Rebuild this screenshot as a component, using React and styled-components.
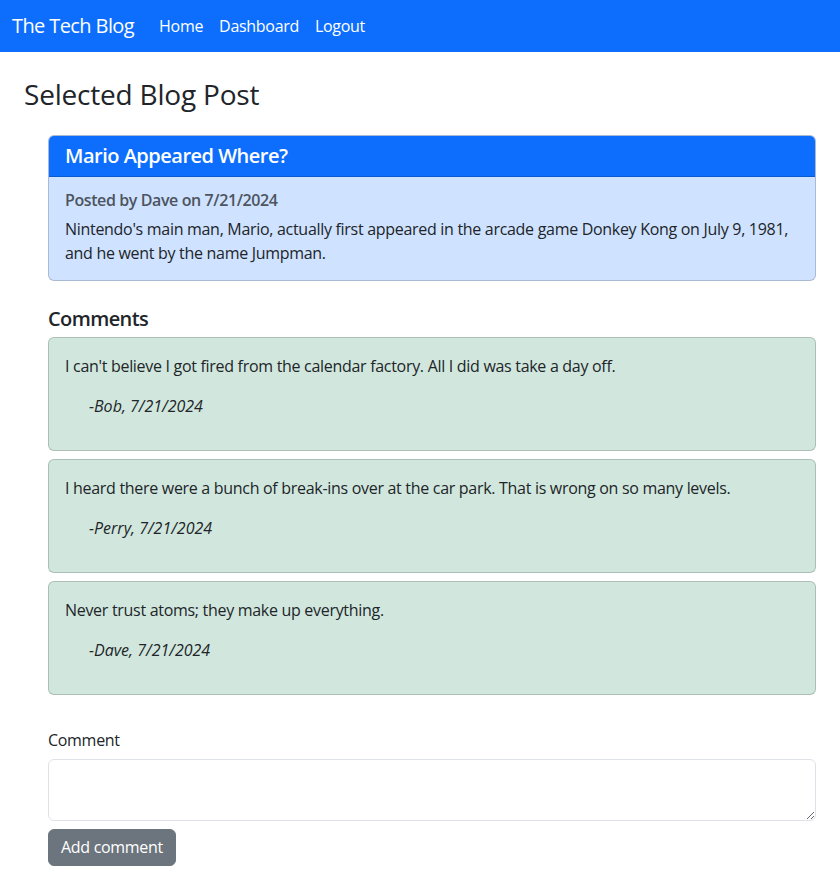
import styled, { createGlobalStyle } from 'styled-components';

const GlobalStyle = createGlobalStyle`
  body {
    margin: 0;
    font-family: "Open Sans", "Noto Sans", sans-serif;
    font-size: 16px;
    line-height: 1.5;
    letter-spacing: -0.3px;
    color: #212529;
    background: #fff;
  }
`;

const Navbar = styled.nav`
  display: flex;
  align-items: center;
  height: 52px;
  padding: 0 12px;
  background: #0d6efd;
  box-sizing: border-box;
`;

const Brand = styled.a`
  font-size: 20px;
  letter-spacing: -0.6px;
  color: #fff;
  margin-right: 25px;
  text-decoration: none;
`;

const NavLinks = styled.div`
  display: flex;
  gap: 16px;
`;

const NavLink = styled.a`
  color: #fff;
  text-decoration: none;
`;

const Main = styled.main`
  padding: 0 24px;
`;

const PageTitle = styled.h2`
  font-size: 28px;
  font-weight: 500;
  letter-spacing: -0.2px;
  line-height: 1.2;
  margin: 26px 0 23px;
`;

const Section = styled.section`
  padding-left: 24px;
`;

const Card = styled.div`
  border: 1px solid rgba(0, 0, 0, 0.175);
  border-radius: 6px;
  background: ${(p) => p.bg || '#fff'};
  overflow: hidden;
`;

const CardHeader = styled.div`
  background: #0d6efd;
  color: #fff;
  padding: 8px 16px;
  border-bottom: 1px solid rgba(0, 0, 0, 0.175);
  font-size: 20px;
  font-weight: 600;
  letter-spacing: -0.5px;
  line-height: 24px;
`;

const CardBody = styled.div`
  padding: 14px 16px 15px;
`;

const Meta = styled.h6`
  margin: 0 0 7px;
  font-size: 16px;
  font-weight: 600;
  letter-spacing: -0.4px;
  line-height: 1.2;
  color: #4c545e;
`;

const Text = styled.p`
  margin: 0;
`;

const CommentsTitle = styled.h5`
  font-size: 20px;
  font-weight: 600;
  letter-spacing: -0.6px;
  line-height: 1.2;
  margin: 26px 0 6px;
`;

const CommentList = styled.div`
  display: flex;
  flex-direction: column;
  gap: 8px;
`;

const CommentBody = styled.div`
  padding: 16px;
`;

const CommentText = styled.p`
  margin: 0 0 16px;
`;

const Signature = styled.p`
  margin: 0 0 16px 24px;
  font-style: italic;
  letter-spacing: 0;
`;

const Form = styled.form`
  margin-top: 33px;
`;

const Label = styled.label`
  display: block;
  margin-bottom: 7px;
`;

const TextArea = styled.textarea`
  display: block;
  width: 100%;
  box-sizing: border-box;
  height: 62px;
  padding: 6px 12px;
  font: inherit;
  color: #212529;
  border: 1px solid #dee2e6;
  border-radius: 6px;
  resize: vertical;
`;

const Button = styled.button`
  margin-top: 8px;
  padding: 6px 12px;
  font: inherit;
  line-height: 23px;
  letter-spacing: -0.3px;
  color: #fff;
  background: #6c757d;
  border: 1px solid #6c757d;
  border-radius: 6px;
`;

const comments = [
  { text: "I can't believe I got fired from the calendar factory. All I did was take a day off.", by: 'Bob' },
  { text: 'I heard there were a bunch of break-ins over at the car park. That is wrong on so many levels.', by: 'Perry' },
  { text: 'Never trust atoms; they make up everything.', by: 'Dave' },
];

export default function App() {
  return (
    <>
      <GlobalStyle />
      <Navbar>
        <Brand href="#">The Tech Blog</Brand>
        <NavLinks>
          <NavLink href="#">Home</NavLink>
          <NavLink href="#">Dashboard</NavLink>
          <NavLink href="#">Logout</NavLink>
        </NavLinks>
      </Navbar>
      <Main>
        <PageTitle>Selected Blog Post</PageTitle>
        <Section>
          <Card bg="#cfe2ff">
            <CardHeader>Mario Appeared Where?</CardHeader>
            <CardBody>
              <Meta>Posted by Dave on 7/21/2024</Meta>
              <Text>
                Nintendo's main man, Mario, actually first appeared in the arcade game Donkey Kong on July 9, 1981, and he went by the name Jumpman.
              </Text>
            </CardBody>
          </Card>
          <CommentsTitle>Comments</CommentsTitle>
          <CommentList>
            {comments.map((c) => (
              <Card key={c.by} bg="#d1e7dd">
                <CommentBody>
                  <CommentText>{c.text}</CommentText>
                  <Signature>-{c.by}, 7/21/2024</Signature>
                </CommentBody>
              </Card>
            ))}
          </CommentList>
          <Form onSubmit={(e) => e.preventDefault()}>
            <Label htmlFor="comment">Comment</Label>
            <TextArea id="comment" rows={2} />
            <Button type="submit">Add comment</Button>
          </Form>
        </Section>
      </Main>
    </>
  );
}
